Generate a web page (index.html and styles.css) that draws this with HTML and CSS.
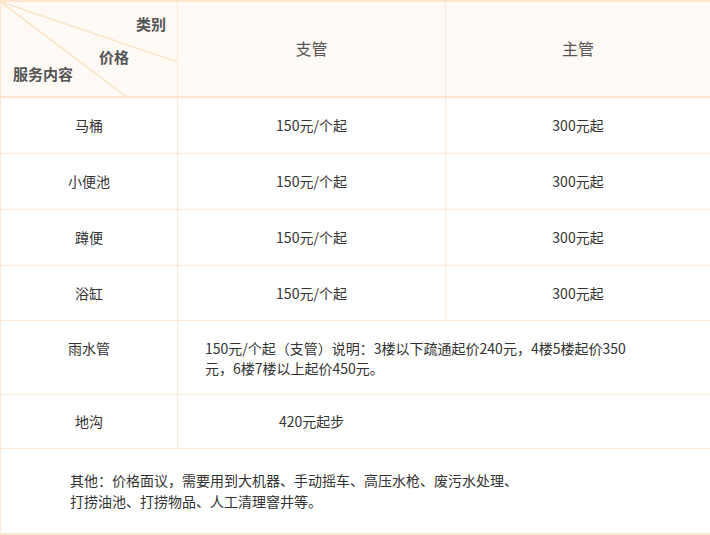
FILE: index.html
```html
<!DOCTYPE html>
<html lang="zh-CN">
<head>
<meta charset="utf-8">
<title>价格表</title>
<link rel="stylesheet" href="styles.css">
</head>
<body>
<table class="price">
  <colgroup>
    <col class="c1">
    <col class="c2">
    <col class="c3">
  </colgroup>
  <thead>
    <tr class="head">
      <th class="diag">
        <svg class="diag-lines" width="177" height="96" viewBox="0 0 177 96" aria-hidden="true">
          <line x1="0" y1="0" x2="177" y2="60" />
          <line x1="0" y1="0" x2="127" y2="96" />
        </svg>
        <span class="lbl lbl-type">类别</span>
        <span class="lbl lbl-price">价格</span>
        <span class="lbl lbl-service">服务内容</span>
      </th>
      <th class="hd">支管</th>
      <th class="hd">主管</th>
    </tr>
  </thead>
  <tbody>
    <tr class="r"><td>马桶</td><td>150元/个起</td><td>300元起</td></tr>
    <tr class="r"><td>小便池</td><td>150元/个起</td><td>300元起</td></tr>
    <tr class="r"><td>蹲便</td><td>150元/个起</td><td>300元起</td></tr>
    <tr class="r r4"><td>浴缸</td><td>150元/个起</td><td>300元起</td></tr>
    <tr class="rain">
      <td>雨水管</td>
      <td colspan="2" class="left"><div class="note">150元/个起（支管）说明：3楼以下疏通起价240元，4楼5楼起价350元，6楼7楼以上起价450元。</div></td>
    </tr>
    <tr class="ditch">
      <td>地沟</td>
      <td colspan="2" class="left ditch-val">420元起步</td>
    </tr>
    <tr class="other">
      <td colspan="3" class="left other-cell">其他：价格面议，需要用到大机器、手动摇车、高压水枪、废污水处理、<br>打捞油池、打捞物品、人工清理窨井等。</td>
    </tr>
  </tbody>
</table>
</body>
</html>
```
FILE: styles.css
```css
html, body {
  margin: 0;
  padding: 0;
  background: #ffffff;
}

body {
  font-family: "Noto Sans CJK SC", "Microsoft YaHei", sans-serif;
  font-size: 14px;
  color: #333333;
}

.price {
  width: 710px;
  border-collapse: collapse;
  table-layout: fixed;
}

.c1 { width: 177px; }
.c2 { width: 268px; }
.c3 { width: 265px; }

.price th,
.price td {
  border: 1px solid #fde9d3;
  padding: 0;
  text-align: center;
  vertical-align: middle;
  line-height: 20px;
}

.head {
  height: 94px;
  background: #fffaf5;
}

.price .head th {
  border-bottom: 2px solid #fde6cc;
  border-top: 2px solid #fde6cc;
}

.price .hd {
  font-size: 16px;
  font-weight: normal;
  color: #555555;
  padding-bottom: 2px;
}

.price .diag {
  position: relative;
  height: 94px;
}

.diag-lines {
  position: absolute;
  left: 0;
  top: 0;
  display: block;
}

.diag-lines line {
  stroke: #fde3c6;
  stroke-width: 1.4;
}

.lbl {
  position: absolute;
  font-size: 15px;
  font-weight: bold;
  color: #555555;
  line-height: 20px;
  white-space: nowrap;
}

.lbl-type { left: 135px; top: 12px; }
.lbl-price { left: 98px; top: 45px; }
.lbl-service { left: 12px; top: 62px; }

.r { height: 56px; }
.r4 { height: 55px; }

.rain { height: 74px; }
.price .rain td { vertical-align: top; padding-top: 17px; }

.price td.left { text-align: left; }

.note {
  padding-left: 27px;
  width: 432px;
}

.ditch { height: 54px; }
.price td.ditch-val { padding-left: 101px; }

.other { height: 86px; }
.price td.other-cell {
  padding-left: 69px;
  line-height: 21px;
  border-bottom: 2px solid #fde6cc;
  border-right: 2px solid #fde6cc;
}
```
